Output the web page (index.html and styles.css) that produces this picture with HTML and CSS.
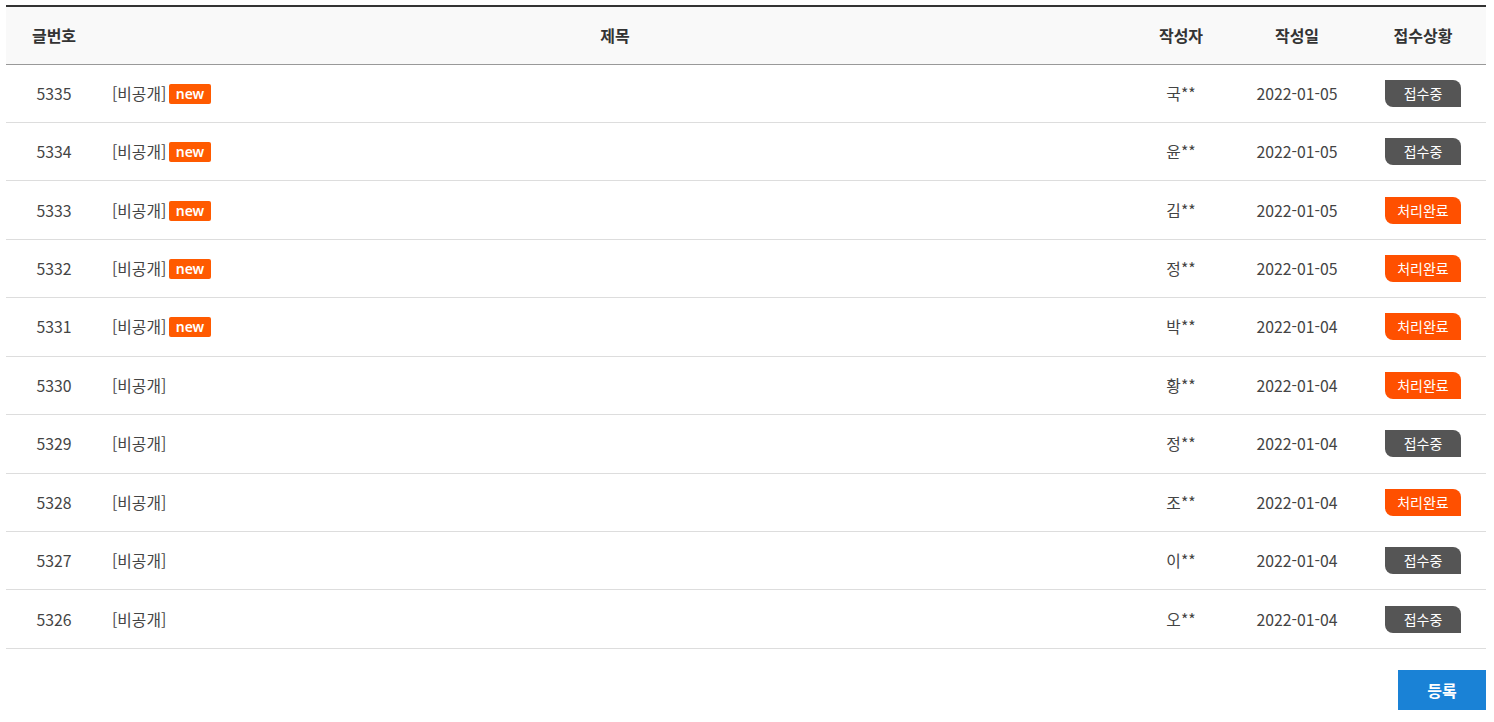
FILE: index.html
```html
<!DOCTYPE html>
<html lang="ko">
<head>
    <meta charset="UTF-8">
    <meta name="viewport" content="width=device-width, initial-scale=1.0">
    <title>문의 게시판</title>
    <link rel="stylesheet" href="styles.css">
</head>
<body>
    <main class="board">
        <table class="board-table">
            <colgroup>
                <col class="col-no">
                <col class="col-title">
                <col class="col-writer">
                <col class="col-date">
                <col class="col-state">
            </colgroup>
            <thead>
                <tr>
                    <th>글번호</th>
                    <th>제목</th>
                    <th>작성자</th>
                    <th>작성일</th>
                    <th>접수상황</th>
                </tr>
            </thead>
            <tbody>
                <tr>
                    <td>5335</td>
                    <td class="title">[비공개] <span class="new">new</span></td>
                    <td>국**</td>
                    <td>2022-01-05</td>
                    <td><span class="state state-wait">접수중</span></td>
                </tr>
                <tr>
                    <td>5334</td>
                    <td class="title">[비공개] <span class="new">new</span></td>
                    <td>윤**</td>
                    <td>2022-01-05</td>
                    <td><span class="state state-wait">접수중</span></td>
                </tr>
                <tr>
                    <td>5333</td>
                    <td class="title">[비공개] <span class="new">new</span></td>
                    <td>김**</td>
                    <td>2022-01-05</td>
                    <td><span class="state state-done">처리완료</span></td>
                </tr>
                <tr>
                    <td>5332</td>
                    <td class="title">[비공개] <span class="new">new</span></td>
                    <td>정**</td>
                    <td>2022-01-05</td>
                    <td><span class="state state-done">처리완료</span></td>
                </tr>
                <tr>
                    <td>5331</td>
                    <td class="title">[비공개] <span class="new">new</span></td>
                    <td>박**</td>
                    <td>2022-01-04</td>
                    <td><span class="state state-done">처리완료</span></td>
                </tr>
                <tr>
                    <td>5330</td>
                    <td class="title">[비공개]</td>
                    <td>황**</td>
                    <td>2022-01-04</td>
                    <td><span class="state state-done">처리완료</span></td>
                </tr>
                <tr>
                    <td>5329</td>
                    <td class="title">[비공개]</td>
                    <td>정**</td>
                    <td>2022-01-04</td>
                    <td><span class="state state-wait">접수중</span></td>
                </tr>
                <tr>
                    <td>5328</td>
                    <td class="title">[비공개]</td>
                    <td>조**</td>
                    <td>2022-01-04</td>
                    <td><span class="state state-done">처리완료</span></td>
                </tr>
                <tr>
                    <td>5327</td>
                    <td class="title">[비공개]</td>
                    <td>이**</td>
                    <td>2022-01-04</td>
                    <td><span class="state state-wait">접수중</span></td>
                </tr>
                <tr>
                    <td>5326</td>
                    <td class="title">[비공개]</td>
                    <td>오**</td>
                    <td>2022-01-04</td>
                    <td><span class="state state-wait">접수중</span></td>
                </tr>
            </tbody>
        </table>

        <div class="board-actions">
            <button type="button" class="btn-write">등록</button>
        </div>
    </main>
</body>
</html>
```

FILE: styles.css
```css
/* Base */
* {
    margin: 0;
    padding: 0;
    box-sizing: border-box;
}

body {
    font-family: 'Noto Sans CJK KR', 'Noto Sans', sans-serif;
    color: #444;
    background: #fff;
}

.board {
    padding: 5px 8px 0 6px;
}

/* Table */
.board-table {
    width: 100%;
    border-collapse: collapse;
    table-layout: fixed;
    border-top: 2px solid #333;
}

.col-no { width: 96px; }
.col-writer { width: 106px; }
.col-date { width: 126px; }
.col-state { width: 126px; }

.board-table th {
    height: 58px;
    background: #f9f9f9;
    border-bottom: 1px solid #999;
    font-size: 16px;
    font-weight: 700;
    color: #333;
    text-align: center;
}

.board-table td {
    height: 58.45px;
    border-bottom: 1px solid #ddd;
    font-size: 15.8px;
    color: #444;
    text-align: center;
}

.board-table td.title {
    text-align: left;
    padding-left: 10px;
}

.new {
    display: inline-block;
    margin-left: -2px;
    padding: 0 7px;
    height: 20px;
    line-height: 19px;
    border-radius: 2px;
    background: #ff5a00;
    color: #fff;
    font-family: 'Noto Sans', sans-serif;
    font-size: 14px;
    font-weight: 600;
    vertical-align: 1px;
}

/* Status badge */
.state {
    display: inline-block;
    width: 76px;
    height: 27px;
    line-height: 26px;
    border-radius: 0 8px 0 8px;
    font-size: 14px;
    color: #fff;
}

.state-wait { background: #555; }
.state-done { background: #ff5000; }

/* Actions */
.board-actions {
    display: flex;
    justify-content: flex-end;
    margin-top: 21px;
}

.btn-write {
    width: 88px;
    height: 40px;
    border: none;
    background: #1a82d6;
    color: #fff;
    font-family: inherit;
    font-size: 16px;
    font-weight: 700;
    cursor: pointer;
}
```
